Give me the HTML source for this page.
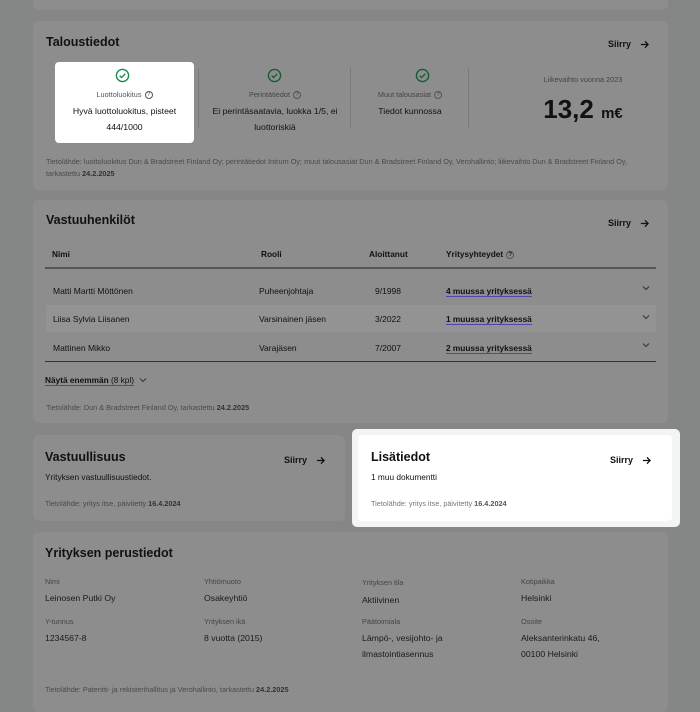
<!DOCTYPE html>
<html><head><meta charset="utf-8"><style>
*{margin:0;padding:0;box-sizing:border-box}
body{width:700px;height:700px;overflow:hidden;background:#858686;font-family:"Liberation Sans",sans-serif;color:#111;position:relative}
.card{position:absolute;background:#8d8d8d;border-radius:6px}
.abs{position:absolute;white-space:nowrap}
h2{position:absolute;font-size:12.5px;font-weight:bold;color:#111}
.siirry{position:absolute;font-size:9px;font-weight:bold;color:#111;display:flex;align-items:center}
.siirry svg{margin-left:9px}
.src{position:absolute;font-size:7.3px;color:#4a4a4a;white-space:nowrap}
.src b{color:#333}
.lbl{position:absolute;font-size:7.3px;color:#444}
.val{position:absolute;font-size:8.7px;color:#1a1a1a;line-height:16px}
.q{display:inline-block;width:8px;height:8px;border:1px solid #555;border-radius:50%;font-size:6px;text-align:center;line-height:7px;vertical-align:middle;margin-left:3px}
.ck{position:absolute;width:15px;height:15px}
.u{border-bottom:1px solid #5b3fb0}
.chev{position:absolute;width:8px;height:6px}
</style></head><body>
<div class="card" style="left:33px;top:-10px;width:635px;height:20px"></div>

<div class="card" style="left:33px;top:21px;width:635px;height:169px"></div>
<h2 style="left:46px;top:35px">Taloustiedot</h2>
<div class="siirry" style="left:608px;top:39px">Siirry<svg width="9" height="9" viewBox="0 0 10 10"><path d="M1 5h8M5.5 1.5L9 5 5.5 8.5" fill="none" stroke="#111" stroke-width="1.4"/></svg></div>
<div class="abs" style="left:55px;top:62px;width:139px;height:81px;background:#fff;border-radius:4px"></div>
<div class="abs" style="left:198px;top:68px;width:1px;height:60px;background:#7a7a7a"></div>
<div class="abs" style="left:350px;top:68px;width:1px;height:60px;background:#7a7a7a"></div>
<div class="abs" style="left:468px;top:68px;width:1px;height:60px;background:#7a7a7a"></div>
<svg class="ck" style="left:115px;top:68px" viewBox="0 0 16 16"><circle cx="8" cy="8" r="6.5" fill="none" stroke="#1a8a4a" stroke-width="1.5"/><path d="M5 8.2l2 2 4-4" fill="none" stroke="#1a8a4a" stroke-width="1.5"/></svg>
<svg class="ck" style="left:267px;top:68px" viewBox="0 0 16 16"><circle cx="8" cy="8" r="6.5" fill="none" stroke="#155e33" stroke-width="1.5"/><path d="M5 8.2l2 2 4-4" fill="none" stroke="#155e33" stroke-width="1.5"/></svg>
<svg class="ck" style="left:415px;top:68px" viewBox="0 0 16 16"><circle cx="8" cy="8" r="6.5" fill="none" stroke="#155e33" stroke-width="1.5"/><path d="M5 8.2l2 2 4-4" fill="none" stroke="#155e33" stroke-width="1.5"/></svg>
<div class="abs" style="left:55px;width:139px;top:90px;text-align:center;font-size:7.3px;color:#555">Luottoluokitus<span class="q">?</span></div>
<div class="abs" style="left:55px;width:139px;top:103px;text-align:center;font-size:8.7px;line-height:16px;white-space:normal">Hyvä luottoluokitus, pisteet 444/1000</div>
<div class="abs" style="left:200px;width:150px;top:90px;text-align:center;font-size:7.3px;color:#444">Perintätiedot<span class="q">?</span></div>
<div class="abs" style="left:205px;width:140px;top:103px;text-align:center;font-size:8.7px;line-height:16px;white-space:normal">Ei perintäsaatavia, luokka 1/5, ei luottoriskiä</div>
<div class="abs" style="left:352px;width:116px;top:90px;text-align:center;font-size:7.3px;color:#444">Muut talousasiat<span class="q">?</span></div>
<div class="abs" style="left:352px;width:116px;top:103px;text-align:center;font-size:8.7px;line-height:16px">Tiedot kunnossa</div>
<div class="abs" style="left:484px;width:198px;top:75px;text-align:center;font-size:7.3px;color:#444">Liikevaihto vuonna 2023</div>
<div class="abs" style="left:484px;width:198px;top:94px;text-align:center;font-size:26px;font-weight:bold">13,2 <span style="font-size:15px">m€</span></div>
<div class="src" style="left:46px;top:156px;line-height:12px">Tietolähde: luottoluokitus Dun &amp; Bradstreet Finland Oy; perintätiedot Intrum Oy; muut talousasiat Dun &amp; Bradstreet Finland Oy, Verohallinto; liikevaihto Dun &amp; Bradstreet Finland Oy,<br>tarkastettu <b>24.2.2025</b></div>

<div class="card" style="left:33px;top:200px;width:635px;height:223px"></div>
<h2 style="left:46px;top:213px">Vastuuhenkilöt</h2>
<div class="siirry" style="left:608px;top:218px">Siirry<svg width="9" height="9" viewBox="0 0 10 10"><path d="M1 5h8M5.5 1.5L9 5 5.5 8.5" fill="none" stroke="#111" stroke-width="1.4"/></svg></div>
<div class="abs" style="left:52px;top:249px;font-size:8.3px;font-weight:bold">Nimi</div>
<div class="abs" style="left:261px;top:249px;font-size:8.3px;font-weight:bold">Rooli</div>
<div class="abs" style="left:369px;top:249px;font-size:8.3px;font-weight:bold">Aloittanut</div>
<div class="abs" style="left:446px;top:249px;font-size:8.3px;font-weight:bold">Yritysyhteydet<span class="q">?</span></div>
<div class="abs" style="left:45px;top:267px;width:611px;height:2px;background:#555"></div>
<div class="abs" style="left:46px;top:305px;width:610px;height:27px;background:#939393"></div>
<div class="abs" style="left:45px;top:361px;width:611px;height:1px;background:#333"></div>
<div class="abs" style="left:53px;top:286px;font-size:8.5px">Matti Martti Möttönen</div>
<div class="abs" style="left:259px;top:286px;font-size:8.5px">Puheenjohtaja</div>
<div class="abs" style="left:375px;top:286px;font-size:8.5px">9/1998</div>
<div class="abs" style="left:446px;top:286px;font-size:8.3px;font-weight:bold"><span class="u">4 muussa yrityksessä</span></div>
<div class="abs" style="left:53px;top:314px;font-size:8.5px">Liisa Sylvia Liisanen</div>
<div class="abs" style="left:259px;top:314px;font-size:8.5px">Varsinainen jäsen</div>
<div class="abs" style="left:375px;top:314px;font-size:8.5px">3/2022</div>
<div class="abs" style="left:446px;top:314px;font-size:8.3px;font-weight:bold"><span class="u">1 muussa yrityksessä</span></div>
<div class="abs" style="left:53px;top:343px;font-size:8.5px">Mattinen Mikko</div>
<div class="abs" style="left:259px;top:343px;font-size:8.5px">Varajäsen</div>
<div class="abs" style="left:375px;top:343px;font-size:8.5px">7/2007</div>
<div class="abs" style="left:446px;top:343px;font-size:8.3px;font-weight:bold"><span class="u">2 muussa yrityksessä</span></div>
<svg class="chev" style="left:642px;top:285px" viewBox="0 0 8 6"><path d="M1 1.5l3 3 3-3" fill="none" stroke="#333" stroke-width="1"/></svg>
<svg class="chev" style="left:642px;top:314px" viewBox="0 0 8 6"><path d="M1 1.5l3 3 3-3" fill="none" stroke="#333" stroke-width="1"/></svg>
<svg class="chev" style="left:642px;top:342px" viewBox="0 0 8 6"><path d="M1 1.5l3 3 3-3" fill="none" stroke="#333" stroke-width="1"/></svg>
<div class="abs" style="left:45px;top:375px;font-size:8.3px;font-weight:bold"><span class="u">Näytä enemmän <span style="font-weight:normal">(8 kpl)</span></span><svg width="8" height="6" viewBox="0 0 8 6" style="margin-left:5px"><path d="M1 1.5l3 3 3-3" fill="none" stroke="#333" stroke-width="1"/></svg></div>
<div class="src" style="left:46px;top:403px">Tietolähde: Dun &amp; Bradstreet Finland Oy, tarkastettu <b>24.2.2025</b></div>

<div class="card" style="left:33px;top:435px;width:312px;height:86px"></div>
<h2 style="left:45px;top:450px">Vastuullisuus</h2>
<div class="siirry" style="left:284px;top:455px">Siirry<svg width="9" height="9" viewBox="0 0 10 10"><path d="M1 5h8M5.5 1.5L9 5 5.5 8.5" fill="none" stroke="#111" stroke-width="1.4"/></svg></div>
<div class="abs" style="left:45px;top:472px;font-size:8.3px">Yrityksen vastuullisuustiedot.</div>
<div class="src" style="left:45px;top:499px">Tietolähde: yritys itse, päivitetty <b>16.4.2024</b></div>

<div class="abs" style="left:352px;top:429px;width:328px;height:98px;background:#f3f4f6;border-radius:5px"></div>
<div class="abs" style="left:358px;top:435px;width:314px;height:86px;background:#fff;border-radius:4px"></div>
<h2 style="left:371px;top:450px">Lisätiedot</h2>
<div class="siirry" style="left:610px;top:455px">Siirry<svg width="9" height="9" viewBox="0 0 10 10"><path d="M1 5h8M5.5 1.5L9 5 5.5 8.5" fill="none" stroke="#111" stroke-width="1.4"/></svg></div>
<div class="abs" style="left:371px;top:472px;font-size:8.3px">1 muu dokumentti</div>
<div class="src" style="left:371px;top:499px;color:#777"><span>Tietolähde: yritys itse, päivitetty </span><b style="color:#555">16.4.2024</b></div>

<div class="card" style="left:33px;top:532px;width:635px;height:180px"></div>
<h2 style="left:45px;top:546px">Yrityksen perustiedot</h2>
<div class="lbl" style="left:45px;top:577px">Nimi</div>
<div class="lbl" style="left:204px;top:577px">Yhtiömuoto</div>
<div class="lbl" style="left:362px;top:578px">Yrityksen tila</div>
<div class="lbl" style="left:521px;top:577px">Kotipaikka</div>
<div class="val" style="left:45px;top:590px">Leinosen Putki Oy</div>
<div class="val" style="left:204px;top:590px">Osakeyhtiö</div>
<div class="val" style="left:362px;top:592px">Aktiivinen</div>
<div class="val" style="left:521px;top:590px">Helsinki</div>
<div class="lbl" style="left:45px;top:617px">Y-tunnus</div>
<div class="lbl" style="left:204px;top:617px">Yrityksen ikä</div>
<div class="lbl" style="left:362px;top:617px">Päätoimiala</div>
<div class="lbl" style="left:521px;top:617px">Osoite</div>
<div class="val" style="left:45px;top:630px">1234567-8</div>
<div class="val" style="left:204px;top:630px">8 vuotta (2015)</div>
<div class="val" style="left:362px;top:630px">Lämpö-, vesijohto- ja<br>ilmastointiasennus</div>
<div class="val" style="left:521px;top:630px">Aleksanterinkatu 46,<br>00100 Helsinki</div>
<div class="src" style="left:45px;top:685px">Tietolähde: Patentti- ja rekisterihallitus ja Verohallinto, tarkastettu <b>24.2.2025</b></div>
</body></html>
